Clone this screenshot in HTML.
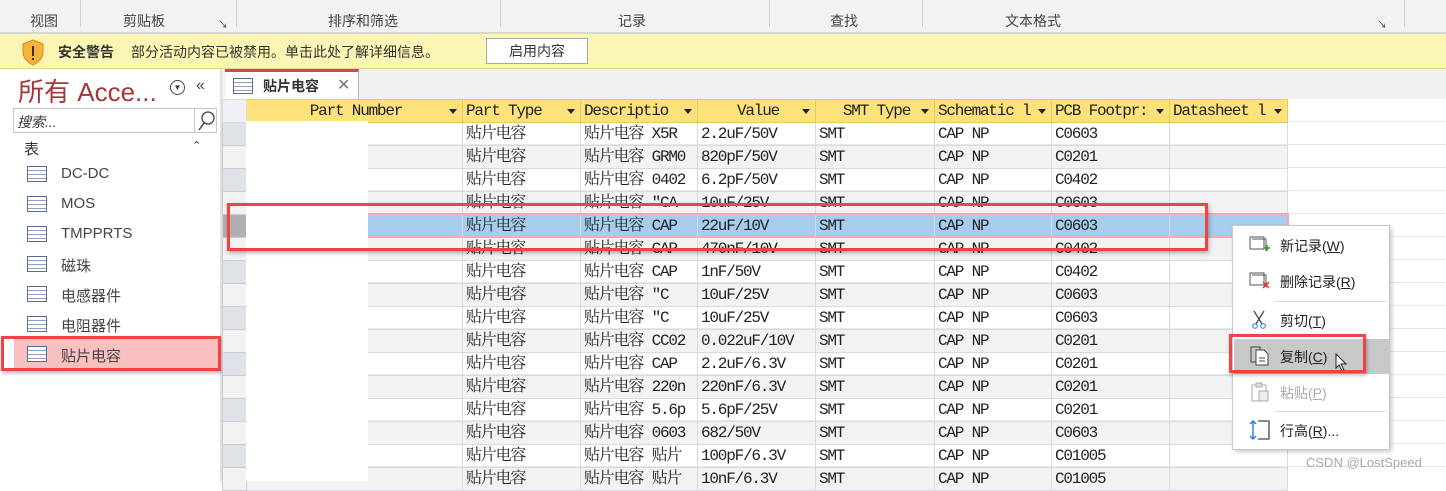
<!DOCTYPE html>
<html><head><meta charset="utf-8"><style>
*{margin:0;padding:0;box-sizing:border-box}
body{width:1446px;height:481px;overflow:hidden;background:#fff;font-family:"Liberation Sans","Noto Sans CJK SC",sans-serif;position:relative;color:#333}
.abs{position:absolute}
.rib{left:0;top:0;width:1446px;height:33px;background:#f3f2f1;border-bottom:1px solid #d6d6d6}
.rib span{position:absolute;top:11px;font-size:14px;color:#444}
.rib i{position:absolute;top:0;width:1px;height:27px;background:#d2d0ce}
.warn{left:0;top:33px;width:1446px;height:36px;background:#fcf6b4;border-top:1px solid #d8d8d8;border-bottom:1px solid #e0d78a}
.nav{left:0;top:69px;width:222px;height:412px;background:#fff;border-right:2px solid #e1e1e1}
.tabs{left:222px;top:69px;width:1224px;height:30px;background:#f0f0f0}
table{border-collapse:collapse;table-layout:fixed;position:absolute;left:222px;top:99px;font-family:"Liberation Mono","Noto Serif CJK SC",serif;font-size:16px;letter-spacing:-1.2px;color:#222}
tr{height:23px}
td,th{height:23px;max-height:23px;line-height:20px;border:1px solid #d5dae4;overflow:hidden;white-space:nowrap;padding:0 0 0 3px;font-weight:normal;text-align:left;vertical-align:middle}
td div,th div{height:21px;overflow:hidden}
th{background:#fde17a;border-color:#e8c860;position:relative}
th b{position:absolute;right:5px;top:9px;border:4px solid transparent;border-top:5px solid #222;border-bottom:0}
td.s{background:#dfe3e8;border-color:#c8ccd2}
tr:nth-child(odd) td{background:#f2f2f2}
tr.sel td{background:#a6cdee}
.ni{position:absolute;left:27px;width:20px;height:16px;border:1px solid #5a6c8c;background:repeating-linear-gradient(#fff 0 3px,#8fa0c0 3px 4px),#fff}
.nt{position:absolute;left:61px;font-size:15px;color:#444}
.menu{left:1232px;top:225px;width:158px;height:225px;background:#fff;border:1px solid #c8c8c8;box-shadow:2px 2px 4px rgba(0,0,0,.2)}
.menu span{position:absolute;left:47px;font-size:14px;color:#222}
.red{border:3px solid #ef4444;box-shadow:1px 2px 4px rgba(0,0,0,.3)}
</style></head><body>
<div class="abs rib">
<span style="left:30px">视图</span><i style="left:80px"></i>
<span style="left:123px">剪贴板</span><span style="left:218px;font-size:10px;top:16px">↘</span><i style="left:236px"></i>
<span style="left:328px">排序和筛选</span><i style="left:500px"></i>
<span style="left:618px">记录</span><i style="left:769px"></i>
<span style="left:830px">查找</span><i style="left:922px"></i>
<span style="left:1005px">文本格式</span><span style="left:1377px;font-size:10px;top:16px">↘</span><i style="left:1404px"></i>
</div>
<div class="abs warn">
<svg class="abs" style="left:20px;top:4px" width="26" height="28" viewBox="0 0 26 28"><path d="M13 2 L23 6 L23 14 Q23 22 13 27 Q3 22 3 14 L3 6 Z" fill="#f7b23b" stroke="#d48a1a"/><rect x="12" y="8" width="2" height="10" fill="#333"/><rect x="12" y="20" width="2" height="2" fill="#333"/></svg>
<span class="abs" style="left:58px;top:8px;font-size:14px;font-weight:bold;color:#333">安全警告</span>
<span class="abs" style="left:131px;top:8px;font-size:14px;color:#333">部分活动内容已被禁用。单击此处了解详细信息。</span>
<div class="abs" style="left:486px;top:4px;width:102px;height:26px;border:1px solid #a8a8a8;background:#fff;font-size:14px;text-align:center;line-height:24px">启用内容</div>
</div>
<div class="abs nav">
<div class="abs" style="left:18px;top:3px;font-size:26px;color:#a4373a">所有 Acce...</div>
<div class="abs" style="left:170px;top:11px;width:15px;height:15px;border:1px solid #444;border-radius:50%;font-size:8px;text-align:center;line-height:13px">▼</div>
<div class="abs" style="left:196px;top:8px;font-size:16px;color:#444">«</div>
<div class="abs" style="left:13px;top:39px;width:204px;height:25px;border:1px solid #c6c6c6"><span class="abs" style="left:3px;top:3px;font-size:14px;font-style:italic;color:#333">搜索...</span><div class="abs" style="left:180px;top:0;width:1px;height:23px;background:#c6c6c6"></div><svg class="abs" style="left:183px;top:2px" width="18" height="20"><circle cx="11" cy="7" r="6" fill="none" stroke="#444" stroke-width="1.3"/><path d="M7 12 L2 19" stroke="#444" stroke-width="1.5"/></svg></div>
<div class="abs" style="left:24px;top:69px;font-size:15px">表</div><div class="abs" style="left:192px;top:70px;font-size:11px">⌃</div>
<div class="ni" style="top:97px"></div><span class="nt" style="top:96px">DC-DC</span>
<div class="ni" style="top:127px"></div><span class="nt" style="top:126px">MOS</span>
<div class="ni" style="top:157px"></div><span class="nt" style="top:156px">TMPPRTS</span>
<div class="ni" style="top:187px"></div><span class="nt" style="top:186px">磁珠</span>
<div class="ni" style="top:217px"></div><span class="nt" style="top:216px">电感器件</span>
<div class="ni" style="top:247px"></div><span class="nt" style="top:246px">电阻器件</span>
<div class="abs" style="left:14px;top:269px;width:204px;height:30px;background:#f9c0c0"></div>
<div class="abs red" style="left:1px;top:267px;width:220px;height:35px"></div>
<div class="ni" style="top:277px"></div><span class="nt" style="top:276px">贴片电容</span>
</div>
<div class="abs tabs">
<div class="abs" style="left:3px;top:0;width:134px;height:30px;background:#fff;border-top:3px solid #c0504d;border-right:1px solid #bbb">
<div class="ni" style="left:8px;top:6px"></div>
<span class="abs" style="left:38px;top:4px;font-size:14px;font-weight:bold;color:#333">贴片电容</span>
<span class="abs" style="left:112px;top:3px;font-size:16px;color:#777">✕</span></div>
</div>
<div class="abs" style="left:222px;top:99px;width:1224px;height:382px;background:repeating-linear-gradient(#fff 0 22px,#e4e7ee 22px 23px)"></div>
<table>
<colgroup><col style="width:24px"><col style="width:216px"><col style="width:118px"><col style="width:117px"><col style="width:118px"><col style="width:119px"><col style="width:117px"><col style="width:118px"><col style="width:118px"></colgroup>
<tr><th style="background:#eef0f4;border-color:#d5dae4"></th><th style="text-align:center">Part Number<b></b></th><th>Part Type<b></b></th><th>Descriptio<b></b></th><th style="text-align:center">Value<b></b></th><th style="text-align:center">SMT Type<b></b></th><th>Schematic l<b></b></th><th>PCB Footpr:<b></b></th><th>Datasheet l<b></b></th></tr>
<tr><td class="s"></td><td></td><td><div>贴片电容</div></td><td><div>贴片电容 X5R</div></td><td>2.2uF/50V</td><td>SMT</td><td>CAP NP</td><td>C0603</td><td></td></tr>
<tr><td class="s"></td><td></td><td><div>贴片电容</div></td><td><div>贴片电容 GRM0</div></td><td>820pF/50V</td><td>SMT</td><td>CAP NP</td><td>C0201</td><td></td></tr>
<tr><td class="s"></td><td></td><td><div>贴片电容</div></td><td><div>贴片电容 0402</div></td><td>6.2pF/50V</td><td>SMT</td><td>CAP NP</td><td>C0402</td><td></td></tr>
<tr><td class="s"></td><td></td><td><div>贴片电容</div></td><td><div>贴片电容 "CA</div></td><td>10uF/25V</td><td>SMT</td><td>CAP NP</td><td>C0603</td><td></td></tr>
<tr class="sel"><td class="s" style="background:#b0b0b0"></td><td></td><td><div>贴片电容</div></td><td><div>贴片电容  CAP</div></td><td>22uF/10V</td><td>SMT</td><td>CAP NP</td><td>C0603</td><td></td></tr>
<tr><td class="s"></td><td></td><td><div>贴片电容</div></td><td><div>贴片电容  CAP</div></td><td>470nF/10V</td><td>SMT</td><td>CAP NP</td><td>C0402</td><td></td></tr>
<tr><td class="s"></td><td></td><td><div>贴片电容</div></td><td><div>贴片电容  CAP</div></td><td>1nF/50V</td><td>SMT</td><td>CAP NP</td><td>C0402</td><td></td></tr>
<tr><td class="s"></td><td></td><td><div>贴片电容</div></td><td><div>贴片电容  "C</div></td><td>10uF/25V</td><td>SMT</td><td>CAP NP</td><td>C0603</td><td></td></tr>
<tr><td class="s"></td><td></td><td><div>贴片电容</div></td><td><div>贴片电容  "C</div></td><td>10uF/25V</td><td>SMT</td><td>CAP NP</td><td>C0603</td><td></td></tr>
<tr><td class="s"></td><td></td><td><div>贴片电容</div></td><td><div>贴片电容 CC02</div></td><td>0.022uF/10V</td><td>SMT</td><td>CAP NP</td><td>C0201</td><td></td></tr>
<tr><td class="s"></td><td></td><td><div>贴片电容</div></td><td><div>贴片电容 CAP</div></td><td>2.2uF/6.3V</td><td>SMT</td><td>CAP NP</td><td>C0201</td><td></td></tr>
<tr><td class="s"></td><td></td><td><div>贴片电容</div></td><td><div>贴片电容 220n</div></td><td>220nF/6.3V</td><td>SMT</td><td>CAP NP</td><td>C0201</td><td></td></tr>
<tr><td class="s"></td><td></td><td><div>贴片电容</div></td><td><div>贴片电容 5.6p</div></td><td>5.6pF/25V</td><td>SMT</td><td>CAP NP</td><td>C0201</td><td></td></tr>
<tr><td class="s"></td><td></td><td><div>贴片电容</div></td><td><div>贴片电容 0603</div></td><td>682/50V</td><td>SMT</td><td>CAP NP</td><td>C0603</td><td></td></tr>
<tr><td class="s"></td><td></td><td><div>贴片电容</div></td><td><div>贴片电容 贴片</div></td><td>100pF/6.3V</td><td>SMT</td><td>CAP NP</td><td>C01005</td><td></td></tr>
<tr><td class="s"></td><td></td><td><div>贴片电容</div></td><td><div>贴片电容 贴片</div></td><td>10nF/6.3V</td><td>SMT</td><td>CAP NP</td><td>C01005</td><td></td></tr>
</table>
<div class="abs" style="left:246px;top:121px;width:122px;height:360px;background:#fff"></div>
<div class="abs" style="left:368px;top:213px;width:921px;height:25px;border:2px solid #f4a8b0;border-left:0"></div>
<div class="abs red" style="left:227px;top:203px;width:981px;height:48px"></div>
<div class="abs menu">
<svg class="abs" style="left:16px;top:10px" width="22" height="18"><rect x="1" y="1" width="14" height="12" fill="none" stroke="#555"/><path d="M3 3h14v12" fill="none" stroke="#555"/><path d="M15 12h6M18 9v6" stroke="#2a9a3a" stroke-width="1.6"/></svg>
<span style="top:10px">新记录(<u>W</u>)</span>
<svg class="abs" style="left:16px;top:46px" width="22" height="18"><rect x="1" y="1" width="14" height="12" fill="none" stroke="#555"/><path d="M3 3h14v12" fill="none" stroke="#555"/><path d="M14 10l6 6M20 10l-6 6" stroke="#e03030" stroke-width="1.5"/></svg>
<span style="top:46px">删除记录(<u>R</u>)</span>
<div class="abs" style="left:41px;top:75px;width:113px;height:1px;background:#ddd"></div>
<svg class="abs" style="left:18px;top:84px" width="16" height="20"><path d="M3 1 L11 14 M13 1 L5 14" stroke="#444" stroke-width="1.2"/><circle cx="4" cy="16" r="2.3" fill="none" stroke="#2a7ad0"/><circle cx="12" cy="16" r="2.3" fill="none" stroke="#2a7ad0"/></svg>
<span style="top:85px">剪切(<u>T</u>)</span>
<div class="abs" style="left:1px;top:113px;width:155px;height:35px;background:#c8c8c8"></div>
<svg class="abs" style="left:17px;top:120px" width="20" height="20"><path d="M1 1h9v15H1z" fill="none" stroke="#444"/><path d="M6 4h8l4 4v11H6z" fill="#fff" stroke="#444"/><path d="M9 12h6M9 15h6" stroke="#444"/></svg>
<span style="top:121px">复制(<u>C</u>)</span>
<svg class="abs" style="left:102px;top:127px" width="14" height="20"><path d="M1 1 L1 15 L4 12 L7 18 L9 17 L6 11 L11 11 Z" fill="#fff" stroke="#222"/></svg>
<svg class="abs" style="left:17px;top:156px" width="20" height="20"><path d="M2 3h14v16H2z" fill="none" stroke="#aaa"/><path d="M6 1h6v4H6z" fill="#ddd" stroke="#aaa"/><path d="M9 9h9v10H9z" fill="#eee" stroke="#aaa"/></svg>
<span style="top:157px;color:#aaa">粘贴(<u>P</u>)</span>
<div class="abs" style="left:41px;top:185px;width:113px;height:1px;background:#ddd"></div>
<svg class="abs" style="left:16px;top:193px" width="22" height="22"><path d="M4 2v18M1 5l3-3 3 3M1 17l3 3 3-3" fill="none" stroke="#2a7ad0" stroke-width="1.4"/><path d="M9 2h11v18H9" fill="none" stroke="#444" stroke-width="1.3"/></svg>
<span style="top:195px">行高(<u>R</u>)...</span>
</div>
<div class="abs red" style="left:1229px;top:334px;width:137px;height:39px"></div>
<div class="abs" style="left:1306px;top:455px;font-size:13px;color:#a8a8a8">CSDN @LostSpeed</div>
</body></html>
